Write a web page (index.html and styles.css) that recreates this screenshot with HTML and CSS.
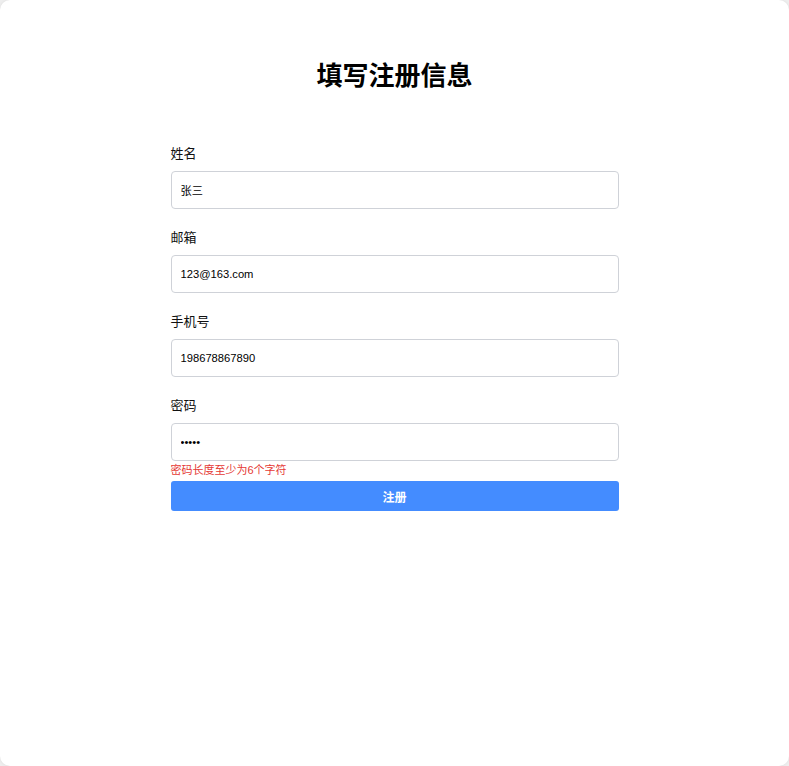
FILE: index.html
```html
<!DOCTYPE html>
<html lang="zh-CN">
<head>
<meta charset="utf-8">
<title>填写注册信息</title>
<link rel="stylesheet" href="styles.css">
</head>
<body>
<div class="card">
  <h2 class="title">填写注册信息</h2>
  <form class="form">
    <div class="field">
      <label class="label">姓名</label>
      <input class="input" type="text" value="张三">
    </div>
    <div class="field">
      <label class="label">邮箱</label>
      <input class="input" type="text" value="123@163.com">
    </div>
    <div class="field">
      <label class="label">手机号</label>
      <input class="input" type="text" value="198678867890">
    </div>
    <div class="field last">
      <label class="label">密码</label>
      <input class="input" type="password" value="12345">
      <div class="error">密码长度至少为6个字符</div>
    </div>
    <button class="btn" type="button">注册</button>
  </form>
</div>
</body>
</html>
```
FILE: styles.css
```css
html, body {
  margin: 0;
  padding: 0;
  height: 100%;
}
body {
  background: #eeeeee;
  font-family: "Liberation Sans", "Noto Sans CJK SC", sans-serif;
  color: #111;
}
.card {
  box-sizing: border-box;
  width: 789px;
  height: 766px;
  background: #fff;
  border-radius: 10px;
  box-shadow: 0 0 3px rgba(0,0,0,0.08);
  padding-top: 61px;
}
.title {
  margin: 0;
  text-align: center;
  font-size: 26px;
  line-height: 30px;
  font-weight: bold;
  color: #000;
}
.form {
  width: 448px;
  margin: 54px auto 0;
  display: flex;
  flex-direction: column;
}
.field {
  display: flex;
  flex-direction: column;
  margin-bottom: 20px;
}
.field.last {
  margin-bottom: 4px;
}
.label {
  font-size: 13px;
  line-height: 18px;
  height: 18px;
  margin-bottom: 8px;
  color: #111;
}
.input {
  box-sizing: border-box;
  height: 38px;
  width: 100%;
  border: 1px solid #cfd2d8;
  border-radius: 4px;
  padding: 0 9px;
  font-family: "Liberation Sans", "Noto Sans CJK SC", sans-serif;
  font-size: 11.2px;
  color: #000;
  background: #fff;
  outline: none;
}
.error {
  margin-top: 2px;
  font-size: 11px;
  line-height: 14px;
  color: #e53935;
}
.btn {
  height: 30px;
  width: 100%;
  border: none;
  border-radius: 3px;
  background: #448cff;
  color: #fff;
  font-family: "Liberation Sans", "Noto Sans CJK SC", sans-serif;
  font-size: 12px;
  font-weight: bold;
  padding: 0;
}
```
